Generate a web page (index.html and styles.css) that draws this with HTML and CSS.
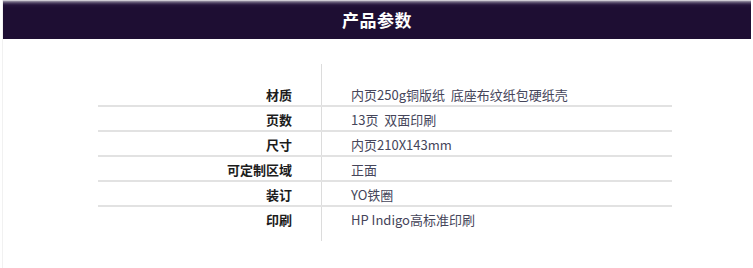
FILE: index.html
```html
<!DOCTYPE html>
<html lang="zh-CN">
<head>
<meta charset="utf-8">
<title>产品参数</title>
<link rel="stylesheet" href="styles.css">
</head>
<body>
<div class="page">
  <header class="bar">
    <h1 class="bar-title">产品参数</h1>
  </header>
  <section class="spec">
    <div class="row spacer-top"><div class="k"></div><div class="v"></div></div>
    <div class="row line"><div class="k">材质</div><div class="v">内页250g铜版纸&nbsp;&nbsp;底座布纹纸包硬纸壳</div></div>
    <div class="row line"><div class="k">页数</div><div class="v">13页&nbsp;&nbsp;双面印刷</div></div>
    <div class="row line"><div class="k">尺寸</div><div class="v">内页210X143mm</div></div>
    <div class="row line"><div class="k">可定制区域</div><div class="v">正面</div></div>
    <div class="row line"><div class="k">装订</div><div class="v">YO铁圈</div></div>
    <div class="row"><div class="k">印刷</div><div class="v">HP Indigo高标准印刷</div></div>
    <div class="row spacer-bottom"><div class="k"></div><div class="v"></div></div>
  </section>
</div>
</body>
</html>
```
FILE: styles.css
```css
html, body {
  margin: 0;
  padding: 0;
  background: #ffffff;
}
body {
  font-family: "Noto Sans CJK SC", "Noto Sans", sans-serif;
  width: 753px;
  height: 268px;
  overflow: hidden;
}
.page {
  margin-left: 2px;
  margin-right: 2px;
  height: 268px;
  border-left: 1px solid #f1f1f1;
}
.bar {
  height: 39px;
  background: linear-gradient(to bottom, #ffffff 0, #9b95a6 1px, #4c3f60 3px, #24143a 5px, #1e0e33 8px, #1e0e33 100%);
  display: flex;
  align-items: center;
  justify-content: center;
}
.bar-title {
  margin: 0;
  color: #ffffff;
  font-size: 17px;
  font-weight: 700;
  line-height: 20px;
  letter-spacing: 0.5px;
  padding-top: 1px;
}
.spec {
  margin: 25px 0 0 95px;
  width: 574px;
  display: flex;
  flex-direction: column;
}
.row {
  display: flex;
  height: 23px;
}
.row.line {
  border-bottom: 2px solid #e2e2e2;
}
.spacer-top { height: 18px; }
.spacer-bottom { height: 11px; }
.k {
  width: 223px;
  flex: none;
  border-right: 1px solid #dcdcdc;
  box-sizing: border-box;
  width: 224px;
  padding: 4px 29px 0 0;
  text-align: right;
  font-size: 13px;
  line-height: 17px;
  font-weight: 700;
  color: #1c1c1c;
}
.v {
  padding: 4px 0 0 29px;
  font-size: 13px;
  line-height: 17px;
  color: #45455a;
  white-space: nowrap;
}
```
